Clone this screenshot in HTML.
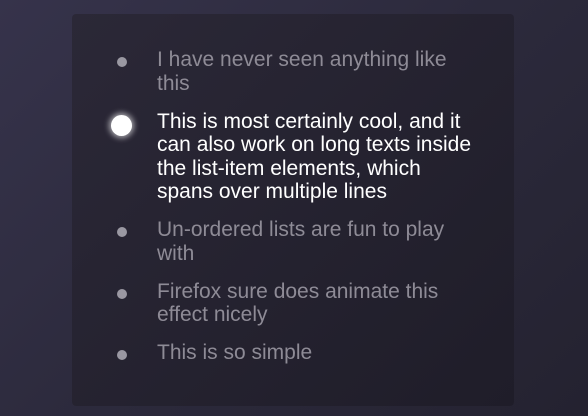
<!DOCTYPE html>
<html><head><style>
html,body{margin:0;padding:0;width:588px;height:416px;overflow:hidden}
body{background:linear-gradient(135deg,#36334b 0%,#2c2a3c 50%,#242230 100%);font-family:"Liberation Sans",sans-serif}
.panel{position:absolute;left:72px;top:14px;width:442px;height:392px;border-radius:4px;background:linear-gradient(135deg,#2b2837 0%,#1f1d29 100%)}
ul{list-style:none;margin:0;padding:0;position:absolute;left:85px;top:34px;width:322px}
li{position:relative;font-size:21px;line-height:23.5px;color:#8e8b96;margin-bottom:14.5px}
li::before{content:"";position:absolute;left:-40px;top:9px;width:10px;height:10px;border-radius:50%;background:#9a98a2}
li.a{color:#fff}
li.a::before{left:-46px;top:5px;width:21px;height:21px;background:#fff;box-shadow:0 0 6px 2px rgba(255,255,255,.6)}
</style></head><body>
<div class="panel"><ul>
<li>I have never seen anything like this</li>
<li class="a">This is most certainly cool, and it can also work on long texts inside the list-item elements, which spans over multiple lines</li>
<li>Un-ordered lists are fun to play with</li>
<li>Firefox sure does animate this effect nicely</li>
<li>This is so simple</li>
</ul></div>
</body></html>
